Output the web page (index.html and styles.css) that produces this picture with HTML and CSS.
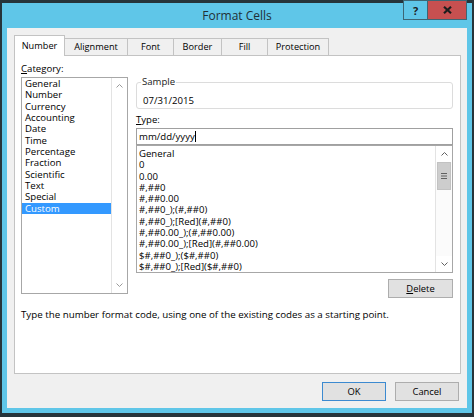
FILE: index.html
```html
<!DOCTYPE html>
<html>
<head>
<meta charset="utf-8">
<title>Format Cells</title>
<link rel="stylesheet" href="styles.css">
</head>
<body>
<div class="window">
  <div class="titlebar">
    <div class="title">Format Cells</div>
    <div class="caption-btns">
      <div class="cbtn help">?</div>
      <div class="cbtn close">
        <svg width="9" height="8" viewBox="0 0 9 8"><path d="M1 0.8 L8 7.2 M8 0.8 L1 7.2" stroke="#1d1d1d" stroke-width="2.2" fill="none"/></svg>
      </div>
    </div>
  </div>
  <div class="client">
    <div class="tabs">
      <div class="tab sel w-number">Number</div>
      <div class="tab w-align">Alignment</div>
      <div class="tab w-font">Font</div>
      <div class="tab w-border">Border</div>
      <div class="tab w-fill">Fill</div>
      <div class="tab w-prot">Protection</div>
    </div>
    <div class="panel">
      <div class="top">
        <div class="left">
          <div class="label"><u>C</u>ategory:</div>
          <div class="listbox cat">
            <ul class="items">
              <li>General</li>
              <li>Number</li>
              <li>Currency</li>
              <li>Accounting</li>
              <li>Date</li>
              <li>Time</li>
              <li>Percentage</li>
              <li>Fraction</li>
              <li>Scientific</li>
              <li>Text</li>
              <li>Special</li>
              <li class="selected">Custom</li>
            </ul>
            <div class="vscroll sb-cat">
              <div class="sb-btn"><svg width="7" height="4" viewBox="0 0 7 4"><path d="M0.5 3.5 L3.5 0.5 L6.5 3.5" stroke="#9a9a9a" fill="none"/></svg></div>
              <div class="sb-track"></div>
              <div class="sb-btn"><svg width="7" height="4" viewBox="0 0 7 4"><path d="M0.5 0.5 L3.5 3.5 L6.5 0.5" stroke="#9a9a9a" fill="none"/></svg></div>
            </div>
          </div>
        </div>
        <div class="right">
          <fieldset class="sample">
            <legend>Sample</legend>
            <div class="sample-val">07/31/2015</div>
          </fieldset>
          <div class="type-label"><u>T</u>ype:</div>
          <div class="input">mm/dd/yyyy<span class="caret"></span></div>
          <div class="listbox fmt">
            <ul class="items">
              <li>General</li>
              <li>0</li>
              <li>0.00</li>
              <li>#,##0</li>
              <li>#,##0.00</li>
              <li>#,##0_);(#,##0)</li>
              <li>#,##0_);[Red](#,##0)</li>
              <li>#,##0.00_);(#,##0.00)</li>
              <li>#,##0.00_);[Red](#,##0.00)</li>
              <li>$#,##0_);($#,##0)</li>
              <li>$#,##0_);[Red]($#,##0)</li>
            </ul>
            <div class="vscroll sb-fmt">
              <div class="sb-btn"><svg width="7" height="4" viewBox="0 0 7 4"><path d="M0.5 3.5 L3.5 0.5 L6.5 3.5" stroke="#606060" fill="none"/></svg></div>
              <div class="sb-track">
                <div class="thumb">
                  <svg width="6" height="6" viewBox="0 0 6 6"><path d="M0 0.5 H6 M0 3 H6 M0 5.5 H6" stroke="#606060" fill="none"/></svg>
                </div>
              </div>
              <div class="sb-btn"><svg width="7" height="4" viewBox="0 0 7 4"><path d="M0.5 0.5 L3.5 3.5 L6.5 0.5" stroke="#606060" fill="none"/></svg></div>
            </div>
          </div>
          <div class="del-row"><button class="btn del"><u>D</u>elete</button></div>
        </div>
      </div>
      <p class="desc">Type the number format code, using one of the existing codes as a starting point.</p>
    </div>
    <div class="footer">
      <button class="btn ok">OK</button>
      <button class="btn">Cancel</button>
    </div>
  </div>
</div>
</body>
</html>
```
FILE: styles.css
```css
* { box-sizing: border-box; }
html, body { margin: 0; padding: 0; }
body {
  background: #26343a;
  width: 474px;
  height: 417px;
  overflow: hidden;
  font-family: "Open Sans", "Noto Sans", sans-serif;
  font-size: 9.6px;
  color: #000;
}
.window {
  position: relative;
  top: 3px;
  margin-left: 2px;
  width: 470px;
  height: 410px;
  background: #5fc6e8;
  display: flex;
  flex-direction: column;
}
.titlebar {
  height: 25px;
  flex: none;
  display: grid;
  grid-template-columns: minmax(0, 1fr) auto minmax(0, 1fr);
}
.title {
  grid-column: 2;
  font-size: 12px;
  line-height: 25px;
  color: #1f2f36;
}
.caption-btns {
  grid-column: 3;
  justify-self: end;
  align-self: start;
  display: flex;
  margin-top: -3px;
  margin-right: 5px;
}
.cbtn {
  height: 20px;
  display: flex;
  align-items: center;
  justify-content: center;
  border: 1px solid #3d6674;
}
.help {
  width: 24px;
  background: #5fc6e8;
  border-right: none;
  font-weight: bold;
  font-size: 11px;
  color: #1d1d1d;
}
.close {
  width: 40px;
  background: #c75050;
}
.client {
  flex: 1;
  margin: 0 5px 5px 5px;
  background: #f0f0f0;
  padding: 7px 6px 0 7px;
  display: flex;
  flex-direction: column;
}
.tabs {
  display: flex;
  align-items: flex-end;
  height: 20px;
  flex: none;
  position: relative;
  z-index: 1;
  font-size: 9.2px;
}
.tab {
  height: 17px;
  border-top: 1px solid #c3c3c3;
  border-right: 1px solid #c3c3c3;
  background: #f0f0f0;
  text-align: center;
  line-height: 15px;
}
.tab.sel {
  height: 21px;
  margin-bottom: -1px;
  background: #fff;
  border-left: 1px solid #c3c3c3;
  line-height: 19px;
}
.w-number { width: 51px; }
.w-align { width: 63px; }
.w-font { width: 46px; }
.w-border { width: 48px; }
.w-fill { width: 46px; }
.w-prot { width: 61px; }
.panel {
  height: 319px;
  flex: none;
  background: #fff;
  border: 1px solid #c3c3c3;
  padding: 6px 7px 0 6px;
}
.top {
  display: flex;
  gap: 8px;
  align-items: flex-start;
}
.left { width: 107px; }
.label { height: 14px; line-height: 14px; }
.listbox {
  display: flex;
  border: 1px solid #a7a7a7;
  background: #fff;
}
.items {
  flex: 1;
  list-style: none;
  margin: 0;
  padding: 0;
  white-space: nowrap;
  overflow: hidden;
}
.cat { margin-top: 1px; height: 217px; }
.cat .items li {
  height: 11.35px;
  line-height: 11.35px;
  padding-left: 3px;
}
.cat .items li.selected {
  background: #3399ff;
  color: #fff;
}
.vscroll {
  display: flex;
  flex-direction: column;
  border-left: 1px solid #e3e3e3;
  background: #fff;
}
.sb-cat { width: 16px; }
.sb-fmt { width: 17px; }
.sb-btn {
  height: 16px;
  flex: none;
  display: flex;
  align-items: center;
  justify-content: center;
}
.sb-track { flex: 1; }
.sb-fmt .sb-track { background: #fbfbfb; }
.thumb {
  margin: 0 1px;
  height: 28px;
  background: #cdcdcd;
  border: 1px solid #c2c2c2;
  display: flex;
  align-items: center;
  justify-content: center;
}
.right { width: 317px; margin-top: 14px; }
.sample {
  margin: 0;
  min-width: 0;
  height: 33px;
  border: 1px solid #dcdcdc;
  border-radius: 3px;
  padding: 7px 4px 1px 4px;
}
.sample legend {
  padding: 0 1px;
  line-height: 12px;
  color: #1a1a1a;
}
.sample-val { padding-left: 2px; line-height: 12px; }
.type-label { margin-top: 5px; height: 12px; line-height: 12px; }
.input {
  margin-top: 2px;
  height: 17px;
  border: 1px solid #a0a0a0;
  background: #fff;
  line-height: 15px;
  padding-left: 2px;
  display: flex;
  align-items: center;
}
.caret {
  display: inline-block;
  width: 1px;
  height: 11px;
  background: #000;
  margin-left: 0.5px;
}
.fmt { height: 128px; }
.fmt .items { padding-top: 2px; }
.fmt .items li {
  height: 11.3px;
  line-height: 11.3px;
  padding-left: 2px;
}
.del-row { margin-top: 6px; display: flex; justify-content: flex-end; }
.btn {
  font-family: inherit;
  font-size: 9.4px;
  color: #000;
  width: 64px;
  height: 19px;
  padding: 0;
  background: #e1e1e1;
  border: 1px solid #adadad;
  line-height: 17px;
}
.del { width: 65px; }
.desc { margin: 11px 0 0 0; line-height: 12px; font-size: 9.75px; }
.footer {
  margin-top: 8px;
  margin-right: 2px;
  display: flex;
  justify-content: flex-end;
  gap: 9px;
}
.ok { border-color: #3c8ad0; }
```
